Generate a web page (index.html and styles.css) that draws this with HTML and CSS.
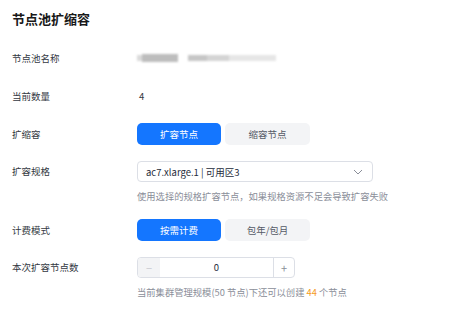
FILE: index.html
```html
<!DOCTYPE html>
<html lang="zh-CN">
<head>
<meta charset="utf-8">
<link rel="stylesheet" href="styles.css">
</head>
<body>
<div class="page">
  <h1 class="title">节点池扩缩容</h1>
  <div class="form">
    <div class="row">
      <div class="label">节点池名称</div>
      <div class="field">
        <div class="blurred">
          <span class="b b1"></span><span class="b b2"></span><span class="b b3"></span><span class="b b4"></span><span class="b b5"></span><span class="b b6"></span>
        </div>
      </div>
    </div>
    <div class="row">
      <div class="label">当前数量</div>
      <div class="field value">4</div>
    </div>
    <div class="row">
      <div class="label">扩缩容</div>
      <div class="field">
        <div class="toggle">
          <span class="opt active">扩容节点</span>
          <span class="opt">缩容节点</span>
        </div>
      </div>
    </div>
    <div class="row top">
      <div class="label">扩容规格</div>
      <div class="field col">
        <div class="select">
          <span>ac7.xlarge.1 | 可用区3</span>
          <svg class="chev" width="10" height="6" viewBox="0 0 10 6"><path d="M1 1l4 4 4-4" fill="none" stroke="#8a8e99" stroke-width="1"/></svg>
        </div>
        <div class="hint">使用选择的规格扩容节点，如果规格资源不足会导致扩容失败</div>
      </div>
    </div>
    <div class="row">
      <div class="label">计费模式</div>
      <div class="field">
        <div class="toggle">
          <span class="opt active">按需计费</span>
          <span class="opt">包年/包月</span>
        </div>
      </div>
    </div>
    <div class="row top">
      <div class="label">本次扩容节点数</div>
      <div class="field col">
        <div class="stepper">
          <span class="btn minus">−</span>
          <span class="num">0</span>
          <span class="btn plus">+</span>
        </div>
        <div class="hint">当前集群管理规模(50 节点)下还可以创建 <span class="em">44</span> 个节点</div>
      </div>
    </div>
  </div>
</div>
</body>
</html>
```

FILE: styles.css
```css
* { box-sizing: border-box; margin: 0; padding: 0; }
body {
  margin: 0;
  background: #fff;
  font-family: "Noto Sans CJK SC", "Noto Sans", sans-serif;
  color: #191919;
  width: 457px;
  height: 309px;
  overflow: hidden;
}
.page { padding: 10px 12px 0 12px; }
.title {
  font-size: 13px;
  font-weight: 700;
  line-height: 17px;
  color: #191919;
  margin-bottom: 20px;
}
.form { display: flex; flex-direction: column; gap: 16px; }
.row {
  display: grid;
  grid-template-columns: 125px 1fr;
  align-items: center;
  min-height: 22px;
}
.row.top { align-items: start; }
.row.top .label { line-height: 21px; }
.label {
  font-size: 9.5px;
  color: #333842;
  line-height: 22px;
}
.field { display: flex; align-items: center; font-size: 9.5px; color: #333842; }
.field.col { flex-direction: column; align-items: flex-start; }
.value { padding-left: 2px; }
.blurred { display: flex; align-items: center; height: 14px; filter: blur(1px); }
.b { display: inline-block; height: 6px; background: #c8c8c8; }
.b1 { width: 5px; background: #dadada; }
.b2 { width: 36px; background: #bdbdbd; height: 8px; }
.b3 { width: 10px; background: transparent; }
.b4 { width: 19px; background: #c6c6c6; }
.b5 { width: 22px; background: #d4d4d4; }
.b6 { width: 47px; background: #e6e6e6; }
.toggle { display: flex; gap: 4px; }
.opt {
  width: 85px;
  height: 22px;
  line-height: 22px;
  border-radius: 5px;
  text-align: center;
  font-size: 9.5px;
  background: #f3f4f6;
  color: #555a66;
}
.opt.active { background: #1476ff; color: #fff; width: 84px; }
.select {
  width: 236px;
  height: 21px;
  border: 1px solid #dcdfe6;
  border-radius: 4px;
  display: flex;
  align-items: center;
  justify-content: space-between;
  padding: 0 9px 0 8px;
  font-size: 9.5px;
  color: #252b3a;
}
.chev { display: block; }
.hint {
  margin-top: 8px;
  font-size: 9.3px;
  line-height: 13px;
  color: #8a8e99;
}
.em { color: #f59a23; }
.stepper {
  width: 158px;
  height: 21px;
  border: 1px solid #dcdfe6;
  border-radius: 4px;
  display: flex;
  align-items: stretch;
  overflow: hidden;
}
.btn {
  width: 21px;
  display: flex;
  align-items: center;
  justify-content: center;
  color: #8a8e99;
  font-size: 11px;
}
.minus { background: #f3f4f6; color: #c8cad0; width: 22px; }
.plus { border-left: 1px solid #dcdfe6; }
.num { flex: 1; text-align: center; line-height: 19px; font-size: 9.5px; color: #252b3a; }
```
